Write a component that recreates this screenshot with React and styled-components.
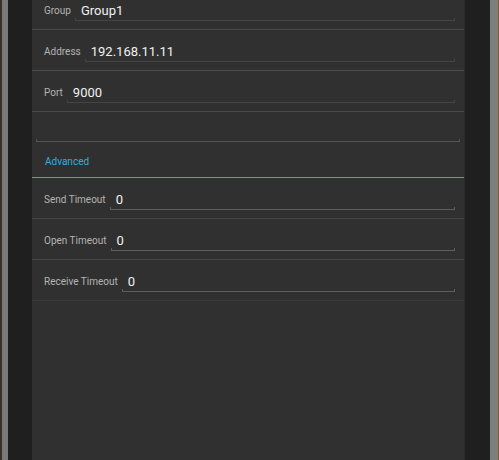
import styled, { createGlobalStyle } from "styled-components";

const GlobalStyle = createGlobalStyle`
  html, body {
    margin: 0;
    padding: 0;
    background: #1f1f1f;
  }
  body {
    font-family: Roboto, "Noto Sans", "Liberation Sans", sans-serif;
  }
`;

const Screen = styled.div`
  display: flex;
  width: 499px;
  height: 460px;
  overflow: hidden;
`;

const Edge = styled.div`
  box-sizing: border-box;
  width: ${({ $w }) => $w}px;
  flex-shrink: 0;
  background: ${({ $bg }) => $bg};
  border-left: ${({ $accent }) => ($accent ? `2px solid ${$accent}` : "none")};
`;

const Frame = styled.div`
  width: ${({ $w }) => $w}px;
  flex-shrink: 0;
  background: #1f1f1f;
`;

const Panel = styled.div`
  width: 433px;
  flex-shrink: 0;
  background: #303030;
  display: flex;
  flex-direction: column;
  border-right: 1px solid #2a2a2a;
  box-sizing: border-box;
`;

const List = styled.div`
  margin-top: -11px;
  display: flex;
  flex-direction: column;
`;

const Row = styled.div`
  box-sizing: border-box;
  height: 41px;
  display: flex;
  align-items: flex-end;
  padding: 0 9px 8px 12px;
  border-bottom: 1px solid ${({ $line }) => $line || "#474747"};
`;

const Label = styled.span`
  font-size: 10px;
  line-height: 12px;
  color: #b4b4b4;
  margin-bottom: 4px;
  white-space: nowrap;
`;

const Edit = styled.div`
  position: relative;
  flex: 1;
  box-sizing: border-box;
  height: 22px;
  margin-left: 4px;
  padding: 0 0 2px 6px;
  display: flex;
  align-items: flex-end;
  border-bottom: 1px solid ${({ $line }) => $line};
  font-size: 13px;
  line-height: 15px;
  color: #f0f0f0;

  &::before,
  &::after {
    content: "";
    position: absolute;
    bottom: -1px;
    width: 1px;
    height: 3px;
    background: ${({ $line }) => $line};
  }
  &::before { left: 0; }
  &::after { right: 0; }
`;

const BlankField = styled.div`
  position: relative;
  box-sizing: border-box;
  height: 30px;
  margin: 0 4px;
  border-bottom: 1px solid #545454;

  &::before,
  &::after {
    content: "";
    position: absolute;
    bottom: -1px;
    width: 1px;
    height: 3px;
    background: #545454;
  }
  &::before { left: 0; }
  &::after { right: 0; }
`;

const SectionHeader = styled.div`
  box-sizing: border-box;
  height: 36px;
  display: flex;
  align-items: flex-end;
  padding: 0 0 9px 13px;
  border-bottom: 1px solid #3ba6d0;
  font-size: 10px;
  line-height: 12px;
  color: #35aede;
`;

const fields = [
  { label: "Group", value: "Group1" },
  { label: "Address", value: "192.168.11.11" },
  { label: "Port", value: "9000" },
];

const advanced = [
  { label: "Send Timeout", value: "0", sep: "#444444" },
  { label: "Open Timeout", value: "0", sep: "#444444" },
  { label: "Receive Timeout", value: "0", sep: "#3a3a3a" },
];

export default function App() {
  return (
    <>
      <GlobalStyle />
      <Screen>
        <Edge $w={8} $bg="#7a7a7a" $accent="#3b3129" />
        <Frame $w={24} />
        <Panel>
          <List>
            {fields.map((f) => (
              <Row key={f.label} $line="#4a4a4a">
                <Label>{f.label}</Label>
                <Edit $line="#444444">{f.value}</Edit>
              </Row>
            ))}
            <BlankField />
            <SectionHeader>Advanced</SectionHeader>
            {advanced.map((f) => (
              <Row key={f.label} $line={f.sep}>
                <Label>{f.label}</Label>
                <Edit $line="#5e5e5e">{f.value}</Edit>
              </Row>
            ))}
          </List>
        </Panel>
        <Frame $w={25} />
        <Edge $w={8} $bg="#7c7f7e" />
        <Edge $w={1} $bg="#8a5a34" />
      </Screen>
    </>
  );
}
